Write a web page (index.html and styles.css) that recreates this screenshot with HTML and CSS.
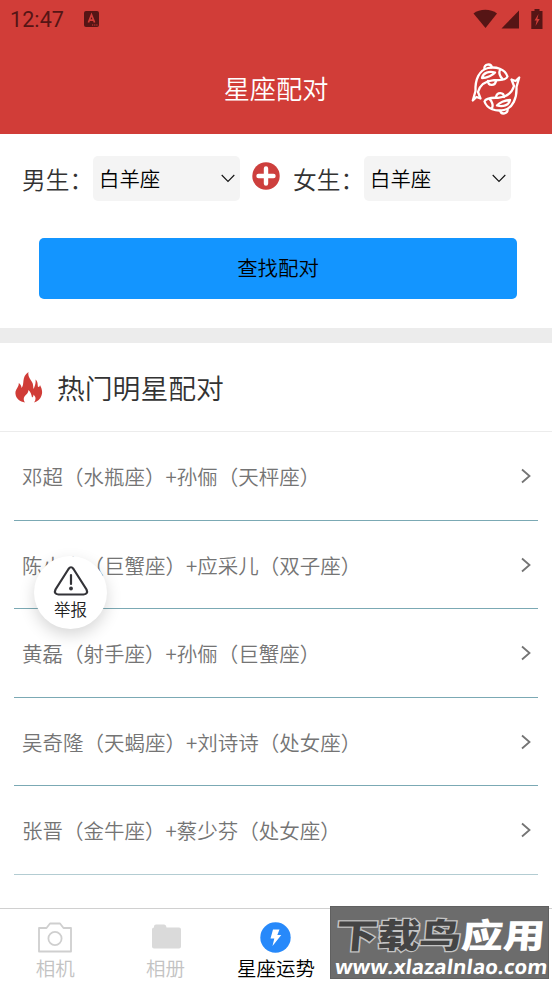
FILE: index.html
```html
<!DOCTYPE html>
<html lang="zh-CN">
<head>
<meta charset="utf-8">
<title>星座配对</title>
<link rel="stylesheet" href="styles.css">
</head>
<body>
<div class="screen">
  <header class="top">
    <div class="status">
      <span class="time">12:47</span>
      <svg class="status-app" width="15" height="16" viewBox="0 0 15 16"><rect width="15" height="16" rx="2" fill="#561515"/><path d="M4.400 11.500 7.500 3.800l3.100 7.700M5.500 9.200h4" fill="none" stroke="#d13d38" stroke-width="1.700"/><path d="M8 14h1.200M10.200 14h1.200M12.300 14h1.200" stroke="#d13d38"/></svg>
      <svg class="status-net" width="70" height="21" viewBox="0 0 70 21"><g fill="#561515"><path d="M0.500 4.500C6.500-.5 18-.5 24 4.500L12.500 19z"/><path d="M46 1.500V19.500H28.500z"/><path d="M61.500 0h5v2h3v18H58.300V2h3.200z"/></g><path d="M65.500 5l-4 6.500h2.200L62.500 17l4.200-7h-2.300z" fill="#d13d38"/></svg>
    </div>
    <div class="titlebar">
      <h1>星座配对</h1>
      <svg class="fishes" width="50" height="52" viewBox="0 0 50 52">
        <g id="fish" fill="none" stroke="#fff" stroke-width="2.300" stroke-linejoin="round" stroke-linecap="round">
          <path d="M4.500 28C4 17 8 7 17 5C25 3.300 34 6 36.500 13.500C35.500 16.500 31 17.500 23 17.200C14 18 9 22 7 29L9.500 35.500L5.500 34L1.800 37.500L4.500 28Z"/>
          <path d="M13.500 5.800C12.500 1 20 0 20.800 4.200M17 18C17 23 24 23.500 25 18M11 15C12 9.500 18 8 24 9.500C22 12 16 15 11 15ZM29 7C27.500 9.500 29 14 31.500 16"/>
        </g>
        <use href="#fish" transform="rotate(180 25 26)"/>
      </svg>
    </div>
  </header>

  <section class="matcher">
    <div class="fields">
      <span class="label">男生：</span>
      <div class="select"><span>白羊座</span><svg width="14" height="9" viewBox="0 0 14 9"><path d="M.7 1 7 7.500 13.300 1" fill="none" stroke="#111" stroke-width="1.100"/></svg></div>
      <svg class="plus" width="28" height="28" viewBox="0 0 28 28"><circle cx="14" cy="14" r="13.700" fill="#cd3f3d"/><path d="M14 6.500v15M6.500 14h15" stroke="#fff" stroke-width="4.400" stroke-linecap="round"/></svg>
      <span class="label">女生：</span>
      <div class="select"><span>白羊座</span><svg width="14" height="9" viewBox="0 0 14 9"><path d="M.7 1 7 7.500 13.300 1" fill="none" stroke="#111" stroke-width="1.100"/></svg></div>
    </div>
    <button class="search">查找配对</button>
  </section>

  <section class="hot">
    <div class="hot-head">
      <svg width="28" height="31" viewBox="0 0 28 31"><path d="M13.500 0C12.500 4 15 7 17 10C18.500 12.500 18 15 18.500 17C20 14.500 21 11 20.500 7.500C23 9.500 22.500 12.500 23 15C24.500 15 24.800 14 25 13C26.500 16 28 19.500 26.500 23.500C25.500 27 22.500 29.500 19 30.500C20.500 28.500 21 26.500 20 24.500L18.500 22.500C18.500 24 18 25 17 25.500C16.500 22 15.500 20 13.500 18C13.500 21 11 22.500 9.500 24.500C8 27 9 29 10 30.500C5 29.500 1 27 .5 22C-.2 17.500 4 15.500 3.800 11C5.500 12 6.500 14 6.500 16C10 12.500 6 5 13.500 0Z" fill="#d03c37"/></svg>
      <h2>热门明星配对</h2>
    </div>
    <ul class="list">
      <li><span>邓超（水瓶座）+孙俪（天枰座）</span><svg width="10" height="16" viewBox="0 0 10 16"><path d="M1 1.500 8.500 8 1 14.500" fill="none" stroke="#747474" stroke-width="1.800"/></svg></li>
      <li><span>陈小春（巨蟹座）+应采儿（双子座）</span><svg width="10" height="16" viewBox="0 0 10 16"><path d="M1 1.500 8.500 8 1 14.500" fill="none" stroke="#747474" stroke-width="1.800"/></svg></li>
      <li><span>黄磊（射手座）+孙俪（巨蟹座）</span><svg width="10" height="16" viewBox="0 0 10 16"><path d="M1 1.500 8.500 8 1 14.500" fill="none" stroke="#747474" stroke-width="1.800"/></svg></li>
      <li><span>吴奇隆（天蝎座）+刘诗诗（处女座）</span><svg width="10" height="16" viewBox="0 0 10 16"><path d="M1 1.500 8.500 8 1 14.500" fill="none" stroke="#747474" stroke-width="1.800"/></svg></li>
      <li><span>张晋（金牛座）+蔡少芬（处女座）</span><svg width="10" height="16" viewBox="0 0 10 16"><path d="M1 1.500 8.500 8 1 14.500" fill="none" stroke="#747474" stroke-width="1.800"/></svg></li>
    </ul>
  </section>

  <nav class="tabs">
    <div class="tab"><svg width="34" height="30" viewBox="0 0 34 30"><path d="M1 5.500h7.500L12 1h10l3.500 4.500H33V29H1z" fill="none" stroke="#cfcfcf" stroke-width="1.800" stroke-linejoin="round"/><circle cx="17" cy="16" r="6.600" fill="none" stroke="#cfcfcf" stroke-width="1.800"/></svg><span>相机</span></div>
    <div class="tab"><svg width="30" height="30" viewBox="0 0 30 30"><path d="M3 5V4q0-2 2-2h8q2 0 2.500 3H28q2 0 2 2v17q0 2-2 2H3q-2 0-2-2V7q0-2 2-2z" fill="#dadada"/></svg><span>相册</span></div>
    <div class="tab active"><svg width="31" height="31" viewBox="0 0 31 31"><circle cx="15.500" cy="15.500" r="15.200" fill="#2789fa"/><path d="M13 7.500h6.500l-2.200 5.500h4L12.500 24l1.800-7.500h-3.800z" fill="#fff"/></svg><span>星座运势</span></div>
  </nav>

  <div class="report">
    <svg width="36" height="30" viewBox="0 0 36 30"><path d="M15.500 3q2.500-3.500 5 0L33.500 23.500q2 4.500-3 5h-25q-5-.5-3-5z" fill="none" stroke="#333338" stroke-width="2.200"/><path d="M18 9v9" stroke="#333338" stroke-width="2.200" stroke-linecap="round"/><circle cx="18" cy="22.500" r="1.900" fill="#333338"/></svg>
    <span>举报</span>
  </div>
  <div class="mark">
    <div class="mark-name"><span class="dark">下载鸟</span><span>应用</span></div>
    <div class="mark-url">www.xlazalnlao.com</div>
  </div>
</div>
</body>
</html>
```
FILE: styles.css
```css
* { box-sizing: border-box; }
body { margin: 0; background: #fff; font-family: "Noto Sans CJK SC", sans-serif; font-weight: 350; }
svg { display: block; flex: none; }
h1, h2, ul { margin: 0; padding: 0; font-weight: inherit; }
.screen { position: relative; width: 552px; height: 983px; overflow: hidden; display: flex; flex-direction: column; }
.top { height: 134px; background: #d13d38; flex: none; }
.status { height: 38px; display: flex; align-items: center; padding: 0 9px 0 10px; color: #561515; }
.time { font: 400 21.500px/38px Roboto, sans-serif; letter-spacing: .1px; width: 74px; padding-top: 1px; }
.status-net { margin-left: auto; }
.titlebar { height: 96px; display: grid; grid-template-columns: 72px 1fr 72px; align-items: center; }
.titlebar h1 { grid-column: 2; text-align: center; font-size: 26.200px; line-height: 40px; color: #fff; margin-top: 3px; }
.fishes { margin-top: 6px; margin-left: -9px; }
.matcher { height: 194px; flex: none; padding-top: 22px; }
.fields { display: flex; align-items: center; height: 45px; padding-left: 22px; }
.label { font-size: 23.700px; line-height: 44px; color: #333; width: 70.500px; white-space: nowrap; flex: none; }
.select { width: 147px; height: 45px; border-radius: 5px; background: #f4f4f4; display: flex; align-items: center; justify-content: space-between; padding: 0 5px 0 6.500px; font-size: 20.400px; color: #000; flex: none; }
.select span { margin-top: -2px; }
.plus { margin: -5px 13px 0 12.500px; }
.search { display: block; width: 478px; height: 60.500px; margin: 37px 0 0 39px; padding: 0 0 3px; border: 0; border-radius: 5px; background: #1395ff; color: #000; font: inherit; font-size: 20.400px; }
.hot { border-top: 15px solid #ececec; }
.hot-head { height: 89px; border-bottom: 1px solid #ececec; display: flex; align-items: center; padding-left: 15px; gap: 14px; }
.hot-head h2 { font-size: 27.800px; line-height: 44px; color: #333; }
.list { list-style: none; padding: 0 14px; }
.list li { height: 88.500px; border-bottom: 1px solid #7ba9b4; display: flex; align-items: center; justify-content: space-between; padding: 1px 7px 0 8px; font-size: 20.500px; color: #747474; }
.list li:last-child { border-color: #b3ccd2; }
.tabs { position: absolute; left: 0; right: 0; bottom: 0; height: 75px; border-top: 1px solid #d0d0d0; background: #fff; display: grid; grid-template-columns: repeat(5, 1fr); }
.tab { display: flex; flex-direction: column; align-items: center; padding-top: 13px; color: #c3c3c3; font-size: 19.500px; line-height: 30px; white-space: nowrap; }
.tab svg { height: 31px; }
.tab.active { color: #000; }
.report { position: absolute; left: 34px; top: 556px; width: 73px; height: 73px; border-radius: 50%; background: #fff; box-shadow: 0 6px 16px rgba(0,0,0,.16); display: flex; flex-direction: column; align-items: center; padding-top: 10px; font-size: 16.500px; line-height: 26px; color: #222; }
.mark { position: absolute; left: 330px; top: 906px; width: 219px; height: 73px; background: #6c6c6c; border: 1px solid #606060; color: #fff; white-space: nowrap; }
.mark-name { width: max-content; font-size: 34px; line-height: 36px; font-weight: 900; margin: 9px 0 0 5px; height: 39px; transform: scaleX(1.230) skewX(-4deg); transform-origin: 0 50%; }
.mark-name .dark { color: #444; -webkit-text-stroke: 2.500px #c4c4c4; paint-order: stroke fill; }
.mark-url { width: max-content; font: 700 20px/24px "Open Sans", sans-serif; margin-left: 4px; transform: skewX(-7deg) scaleX(1.030); transform-origin: 0 50%; }
```
